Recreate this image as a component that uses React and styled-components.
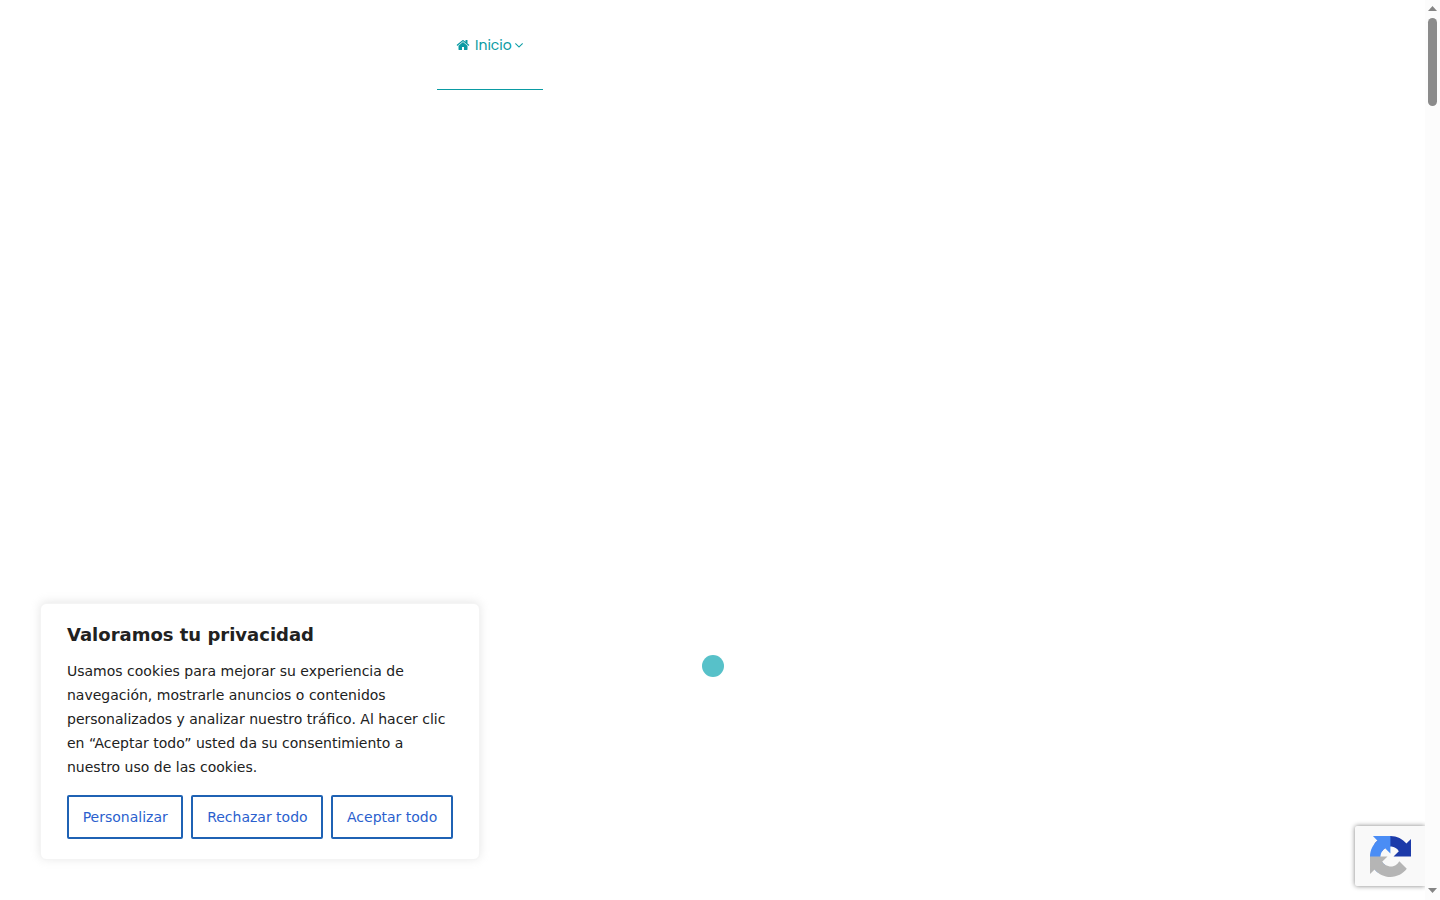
import React from "react";
import styled, { createGlobalStyle } from "styled-components";

const GlobalStyle = createGlobalStyle`
  *, *::before, *::after { box-sizing: border-box; }
  body { margin: 0; background: #fff; overflow: hidden; }
`;

const Window = styled.div`
  display: flex;
  min-height: 100vh;
`;

const Page = styled.div`
  position: relative;
  flex: 1;
  overflow: hidden;
`;

const Header = styled.header`
  display: flex;
  padding: 0 127px;
`;

const LogoSpace = styled.div`
  width: 310px;
`;

const NavLink = styled.a`
  display: flex;
  align-items: center;
  height: 90px;
  padding: 0 17px 0 19px;
  border-bottom: 1px solid #0a9ba3;
  color: #0a9ba3;
  font-family: Poppins, Inter, sans-serif;
  font-size: 14px;
  line-height: 24px;
  text-decoration: none;
`;

const NavText = styled.span`
  margin-left: 5px;
`;

const Icon = styled.svg`
  display: block;
  width: ${({ $size }) => $size}px;
  height: ${({ $size }) => $size}px;
  fill: currentColor;
`;

const LoaderDot = styled.div`
  position: absolute;
  left: 50%;
  bottom: 223px;
  width: 22px;
  height: 22px;
  margin-left: -11px;
  border-radius: 50%;
  background: #57c1c9;
`;

const CookieCard = styled.section`
  position: absolute;
  left: 40px;
  bottom: 40px;
  width: 440px;
  padding: 19px 26px 20px;
  border: 1px solid #f4f4f4;
  border-radius: 6px;
  background: #fff;
  box-shadow: 0 -1px 10px rgba(172, 171, 171, 0.3);
  color: #212121;
  font-family: "DejaVu Sans", sans-serif;
`;

const CookieTitle = styled.h2`
  margin: 0 0 12px;
  font-size: 18px;
  line-height: 24px;
`;

const CookieText = styled.p`
  margin: 0 0 16px;
  font-size: 14px;
  line-height: 24px;
`;

const ButtonRow = styled.div`
  display: flex;
  gap: 8px;
`;

const CookieButton = styled.button`
  flex: 1 1 auto;
  height: 44px;
  padding: 0;
  border: 2px solid #1f62b4;
  border-radius: 2px;
  background: transparent;
  color: #2b5fce;
  font-family: inherit;
  font-size: 14px;
  line-height: 24px;
  white-space: nowrap;
  cursor: pointer;
`;

const CaptchaBadge = styled.aside`
  position: absolute;
  right: 0;
  bottom: 14px;
  display: flex;
  align-items: center;
  width: 70px;
  height: 60px;
  padding-left: 15px;
  border-radius: 2px 0 0 2px;
  background: #f9f9f9;
  box-shadow: 0 0 5px #808080;
`;

const ScrollTrack = styled.div`
  display: flex;
  flex-direction: column;
  align-items: center;
  justify-content: space-between;
  width: 15px;
  padding: 6px 0 7px;
  background: #fcfcfc;
`;

const ScrollTop = styled.div`
  display: flex;
  flex-direction: column;
  align-items: center;
  gap: 7px;
`;

const Arrow = styled.svg`
  display: block;
  width: 9px;
  height: 5px;
  fill: #858585;
`;

const ScrollThumb = styled.div`
  width: 9px;
  height: 88px;
  border-radius: 5px;
  background: #8b8b8b;
`;

const actions = ["Personalizar", "Rechazar todo", "Aceptar todo"];

function CaptchaLogo() {
  return (
    <Icon $size={41} viewBox="0 0 64 64" role="img" aria-label="reCAPTCHA">
      <path fill="#1c3aa9" d="M64 31.955l-.033-1.37V4.687l-7.16 7.16C50.948 4.674 42.033.093 32.05.093c-10.4 0-19.622 4.96-25.458 12.64l11.736 11.86a15.55 15.55 0 0 1 4.754-5.334c2.05-1.6 4.952-2.906 8.968-2.906.485 0 .86.057 1.135.163 4.976.393 9.288 3.14 11.828 7.124l-8.307 8.307L64 31.953" />
      <path fill="#4a8df5" d="M31.862.094l-1.37.033H4.594l7.16 7.16C4.58 13.147 0 22.06 0 32.046c0 10.4 4.96 19.622 12.64 25.458L24.5 45.768a15.55 15.55 0 0 1-5.334-4.754c-1.6-2.05-2.906-4.952-2.906-8.968 0-.485.057-.86.163-1.135.393-4.976 3.14-9.288 7.124-11.828l8.307 8.307L31.86.095" />
      <path fill="#b5b5b5" d="M.001 32.045l.033 1.37v25.898l7.16-7.16c5.86 7.173 14.774 11.754 24.76 11.754 10.4 0 19.622-4.96 25.458-12.64l-11.736-11.86a15.55 15.55 0 0 1-4.754 5.334c-2.05 1.6-4.952 2.906-8.968 2.906-.485 0-.86-.057-1.135-.163-4.976-.393-9.288-3.14-11.828-7.124l8.307-8.307c-10.522.04-22.4.066-27.295-.005" />
    </Icon>
  );
}

export default function App() {
  return (
    <Window>
      <GlobalStyle />
      <Page>
        <Header>
          <LogoSpace />
          <nav>
            <NavLink href="#inicio">
              <Icon $size={14} viewBox="0 0 1792 1792" aria-hidden="true">
                <path d="M1472 992v480q0 26-19 45t-45 19h-384v-384h-256v384h-384q-26 0-45-19t-19-45v-480q0-1 .5-3t.5-3l575-474 575 474q1 2 1 6zm223-69l-62 74q-8 9-21 11h-3q-13 0-21-7l-692-577-692 577q-12 8-24 7-13-2-21-11l-62-74q-8-10-7-23.5t11-21.5l719-599q32-26 76-26t76 26l244 204v-195q0-14 9-23t23-9h192q14 0 23 9t9 23v408l219 182q10 8 11 21.5t-7 23.5z" />
              </Icon>
              <NavText>Inicio</NavText>
              <Icon $size={14} viewBox="0 0 1792 1792" aria-hidden="true">
                <path d="M1395 736q0 13-10 23l-466 466q-10 10-23 10t-23-10l-466-466q-10-10-10-23t10-23l50-50q10-10 23-10t23 10l393 393 393-393q10-10 23-10t23 10l50 50q10 10 10 23z" />
              </Icon>
            </NavLink>
          </nav>
        </Header>
        <LoaderDot />
        <CookieCard aria-labelledby="cookie-title">
          <CookieTitle id="cookie-title">Valoramos tu privacidad</CookieTitle>
          <CookieText>
            Usamos cookies para mejorar su experiencia de navegación, mostrarle
            anuncios o contenidos personalizados y analizar nuestro tráfico. Al
            hacer clic en “Aceptar todo” usted da su consentimiento a nuestro
            uso de las cookies.
          </CookieText>
          <ButtonRow>
            {actions.map((label) => (
              <CookieButton key={label} type="button">{label}</CookieButton>
            ))}
          </ButtonRow>
        </CookieCard>
        <CaptchaBadge>
          <CaptchaLogo />
        </CaptchaBadge>
      </Page>
      <ScrollTrack aria-hidden="true">
        <ScrollTop>
          <Arrow viewBox="0 0 9 5"><path d="M0 5L4.500 0L9 5z" /></Arrow>
          <ScrollThumb />
        </ScrollTop>
        <Arrow viewBox="0 0 9 5"><path d="M0 0H9L4.500 5z" /></Arrow>
      </ScrollTrack>
    </Window>
  );
}
